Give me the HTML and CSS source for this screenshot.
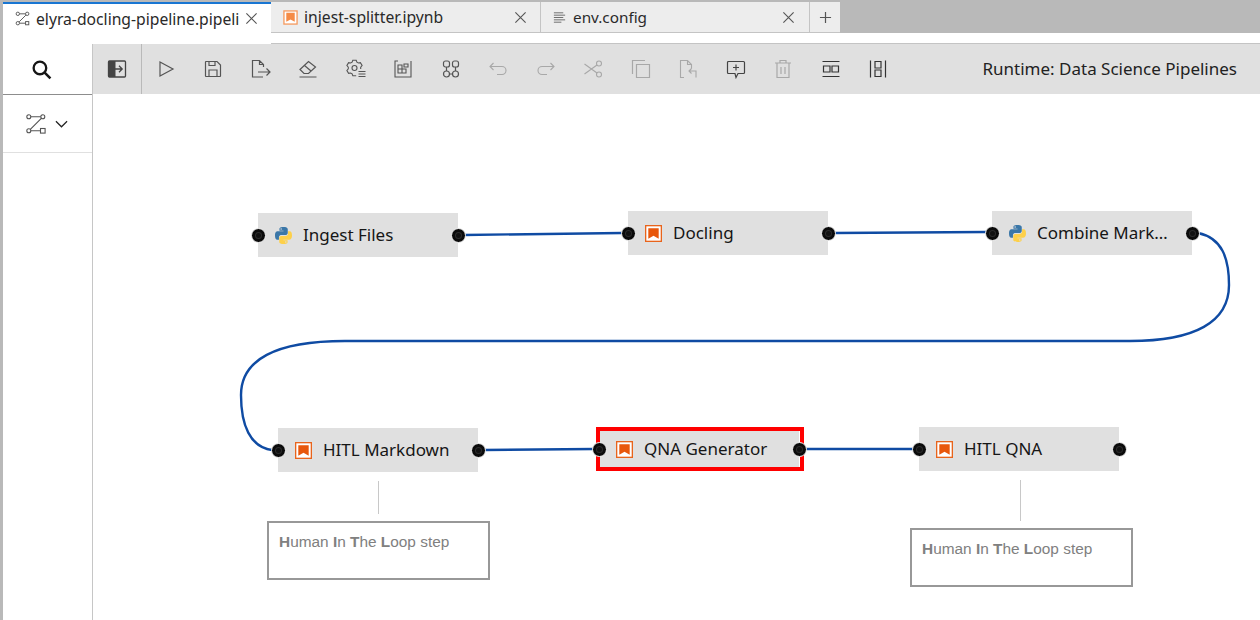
FILE: index.html
```html
<!DOCTYPE html>
<html>
<head>
    <title>elyra-docling-pipeline</title>
    <link rel="stylesheet" href="styles.css">
</head>
<body>
    <div class="tabbar">
        <div class="tab tab-active">
            <svg class="tab-icon" viewBox="0 0 16 16"><g fill="none" stroke="#555" stroke-width="1"><circle cx="3" cy="3" r="1.8"/><circle cx="13" cy="3" r="1.8"/><circle cx="3" cy="13" r="1.8"/><rect x="11.3" y="11.3" width="3.4" height="3.4"/><path d="M5 3h6M11.6 4.400L4.400 11.600M5 13h6"/></g></svg>
            <span class="tab-name">elyra-docling-pipeline.pipeli</span>
            <svg class="tab-close" viewBox="0 0 14 14"><path d="M1.500 1.500l11 11M12.500 1.500l-11 11" stroke="#555" stroke-width="1.2"/></svg>
        </div>
        <div class="tab tab-second">
            <svg class="tab-icon" viewBox="0 0 16 16"><rect x="1" y="1" width="14" height="14" fill="#fff" stroke="#f59a5f" stroke-width="1.4"/><path d="M3.500 3h9v9.500L8 10l-4.500 2.500z" fill="#f58b46"/></svg>
            <span class="tab-name">injest-splitter.ipynb</span>
            <svg class="tab-close" viewBox="0 0 14 14"><path d="M1.500 1.500l11 11M12.500 1.500l-11 11" stroke="#555" stroke-width="1.2"/></svg>
        </div>
        <div class="tab tab-third">
            <svg class="tab-icon" viewBox="0 0 16 16"><path d="M2 3h10M2 5.500h12M2 8h10M2 10.500h12M2 13h8" stroke="#666" stroke-width="1"/></svg>
            <span class="tab-name">env.config</span>
            <svg class="tab-close" viewBox="0 0 14 14"><path d="M1.500 1.500l11 11M12.500 1.500l-11 11" stroke="#555" stroke-width="1.2"/></svg>
        </div>
        <div class="tab-add">
            <svg viewBox="0 0 14 14"><path d="M7 1v12M1 7h12" stroke="#555" stroke-width="1.3"/></svg>
        </div>
    </div>
    <div class="main">
        <div class="sidebar">
            <div class="side-search">
                <svg viewBox="0 0 20 20"><circle cx="8.500" cy="8.500" r="6" fill="none" stroke="#161616" stroke-width="2.200"/><path d="M13 13l5.500 5.500" stroke="#161616" stroke-width="2.400"/></svg>
            </div>
            <div class="side-palette">
                <svg class="side-pipe" viewBox="0 0 20 20"><g fill="none" stroke="#555" stroke-width="1.100"><circle cx="2.800" cy="2.800" r="2"/><circle cx="16.800" cy="2.800" r="2"/><circle cx="2.800" cy="16.800" r="2"/><rect x="14.500" y="14.500" width="4.600" height="4.600"/><path d="M5 2.800h9.700M15.300 4.300L4.300 15.300M5 16.800h9.500"/></g></svg>
                <svg class="side-chevron" viewBox="0 0 14 8"><path d="M1 1l6 6 6-6" fill="none" stroke="#222" stroke-width="1.300"/></svg>
            </div>
        </div>
        <div class="content">
            <div class="toolbar">
                <div class="tool tool-first">
                    <svg viewBox="0 0 20 20"><rect x="1.500" y="2" width="17" height="16" rx="1" fill="none" stroke="#444" stroke-width="1.300"/><rect x="1.500" y="2" width="7" height="16" fill="#444"/><path d="M7 10h8M12 6.800l3.200 3.200-3.200 3.200" fill="none" stroke="#444" stroke-width="1.300"/></svg>
                </div>
                <div class="tool"><svg viewBox="0 0 20 20"><path d="M4 3l13 7-13 7z" fill="none" stroke="#555" stroke-width="1.200"/></svg></div>
                <div class="tool"><svg viewBox="0 0 20 20"><path d="M3 2.500h11l3.500 3.500v11a.5.5 0 0 1-.5.500H3a.5.5 0 0 1-.5-.500V3a.5.5 0 0 1 .5-.500zM6 17.500v-6.500h8v6.500M6 2.500v4h6v-4" fill="none" stroke="#555" stroke-width="1.200"/></svg></div>
                <div class="tool"><svg viewBox="0 0 20 20"><path d="M12 18H1.500V1.500h7l4 4V8M8.500 1.500v4h4M7 13h12M15.500 9.500L19 13l-3.500 3.500" fill="none" stroke="#555" stroke-width="1.200"/></svg></div>
                <div class="tool"><svg viewBox="0 0 20 20"><path d="M1.500 18h17M2 10.500L10.500 2.500l7 5.500-7 6.500H6z" fill="none" stroke="#555" stroke-width="1.200"/><path d="M6.500 6.500l6.500 5.500" stroke="#555" stroke-width="1.200"/></svg></div>
                <div class="tool"><svg viewBox="0 0 20 20"><path d="M14.700 10.100L14.700 8.100L16.100 6.500L14.400 3.600L12.400 4L10.900 3.200L10.200 1.200L6.800 1.200L6.100 3.200L4.600 4L2.600 3.600L.9 6.500L2.300 8.100L2.300 9.900L.9 11.500L2.600 14.400L4.600 14L6.100 14.800L6.800 16.800L10.200 16.800" fill="none" stroke="#555" stroke-width="1.100"/><circle cx="8.500" cy="9" r="2.500" fill="none" stroke="#555" stroke-width="1.100"/><path d="M12.500 12.500h7M12.500 15h7M12.500 17.500h7" stroke="#555" stroke-width="1.100"/></svg></div>
                <div class="tool"><svg viewBox="0 0 20 20"><path d="M18 2v16H2V2h3" fill="none" stroke="#555" stroke-width="1.100"/><path d="M5 6h4v4H5zM9 10h4v4H9zM5 10h4v4H5zM11 5h4v3h-4z" fill="none" stroke="#555" stroke-width="1.100"/></svg></div>
                <div class="tool"><svg viewBox="0 0 20 20"><g fill="none" stroke="#555" stroke-width="1.200"><rect x="2.500" y="2" width="6" height="6" rx="2"/><rect x="11.500" y="2" width="6" height="6" rx="2"/><rect x="2.500" y="12" width="6" height="6" rx="3"/><rect x="11.500" y="12" width="6" height="6" rx="3"/><path d="M5.500 8v4M14.500 8v4M8.500 15h3"/></g></svg></div>
                <div class="tool tool-off"><svg viewBox="0 0 20 20"><path d="M5.500 4L2 7.500 5.500 11M2 7.500h12a3.800 3.800 0 0 1 0 8H9" fill="none" stroke="#a8a8a8" stroke-width="1.100"/></svg></div>
                <div class="tool tool-off"><svg viewBox="0 0 20 20"><path d="M14.500 4L18 7.500 14.500 11M18 7.500H6a3.800 3.800 0 0 0 0 8h5" fill="none" stroke="#a8a8a8" stroke-width="1.100"/></svg></div>
                <div class="tool tool-off"><svg viewBox="0 0 20 20"><g fill="none" stroke="#a8a8a8" stroke-width="1.100"><circle cx="16" cy="4.500" r="2.500"/><circle cx="16" cy="15.500" r="2.500"/><path d="M14 6L1.500 15M14 14L1.500 5"/></g></svg></div>
                <div class="tool tool-off"><svg viewBox="0 0 20 20"><path d="M5.500 5.500h13v13h-13zM14 1.500H1.500V15" fill="none" stroke="#a8a8a8" stroke-width="1.200"/></svg></div>
                <div class="tool tool-off"><svg viewBox="0 0 20 20"><path d="M6 18.500H2.500V1.500h7l4 4v4M9.500 1.500v4h4M11 12H18v6.500M13.500 9.500L11 12l2.500 2.500" fill="none" stroke="#a8a8a8" stroke-width="1.100"/></svg></div>
                <div class="tool"><svg viewBox="0 0 20 20"><path d="M2.500 2.500h15a1 1 0 0 1 1 1v10a1 1 0 0 1-1 1h-5.500L10 18.500l-1-4H2.500a1 1 0 0 1-1-1v-10a1 1 0 0 1 1-1zM10 5.500v6M7 8.500h6" fill="none" stroke="#444" stroke-width="1.200"/></svg></div>
                <div class="tool tool-off"><svg viewBox="0 0 20 20"><path d="M2 4h16M7 4V1.500h6V4M4 4v14.500h12V4M8 8v7M12 8v7" fill="none" stroke="#a8a8a8" stroke-width="1.200"/></svg></div>
                <div class="tool"><svg viewBox="0 0 20 20"><path d="M1.500 2.500h17M1.500 17.500h17M2.500 7h6.500v6H2.500zM11 7h6.500v6H11z" fill="none" stroke="#333" stroke-width="1.200"/></svg></div>
                <div class="tool"><svg viewBox="0 0 20 20"><path d="M2.500 1.500v17M17.500 1.500v17M7 2.500h6v6.500H7zM7 11h6v6.500H7z" fill="none" stroke="#333" stroke-width="1.200"/></svg></div>
                <div class="runtime">Runtime: Data Science Pipelines</div>
            </div>
            <div class="canvas">
                <svg class="links" viewBox="93 94 1167 526">
                    <g fill="none" stroke="#0f4ba3" stroke-width="2.400">
                        <path d="M464 235L622 233"/>
                        <path d="M834 233L986 232"/>
                        <path d="M1198 233C1222 238 1229 258 1229 285C1229 322 1195 341 1130 341L345 341C275 341 241 360 241 395C241 425 250 447 272 450"/>
                        <path d="M484 450L594 449"/>
                        <path d="M805 449L913 449"/>
                    </g>
                    <path d="M378.500 481V514M1020.500 480V521" stroke="#c8c8c8" stroke-width="1"/>
                </svg>

                <div class="node node-ingest">
                    <span class="port port-in"></span>
                    <svg class="node-icon" viewBox="0 0 18 18"><path d="M8.900 0C4.500 0 4.700 1.900 4.700 1.900v2h4.300v.6H3C3 4.500 0 4.200 0 8.900s2.600 4.500 2.600 4.500h1.600v-2.200s-.1-2.600 2.600-2.600h4.300s2.400 0 2.400-2.400V2.400S13.900 0 8.900 0zM6.500 1.400a.8.8 0 1 1 0 1.600.8.8 0 0 1 0-1.600z" fill="#3b77a8"/><path d="M9.100 18c4.400 0 4.200-1.900 4.200-1.900v-2H9v-.6h6s3 .3 3-4.400-2.600-4.500-2.600-4.500h-1.600v2.200s.1 2.600-2.600 2.600H6.900s-2.400 0-2.400 2.400v3.800S4.100 18 9.100 18zm2.400-1.400a.8.8 0 1 1 0-1.600.8.8 0 0 1 0 1.600z" fill="#fdd04a"/></svg>
                    <span class="node-label">Ingest Files</span>
                    <span class="port port-out"></span>
                </div>
                <div class="node node-docling">
                    <span class="port port-in"></span>
                    <svg class="node-icon" viewBox="0 0 18 18"><rect x=".7" y=".7" width="16.600" height="16.600" fill="#fff" stroke="#e8641c" stroke-width="1.400"/><path d="M3.500 3.500h11v11L9 11.500l-5.500 3z" fill="#e8570c"/></svg>
                    <span class="node-label">Docling</span>
                    <span class="port port-out"></span>
                </div>
                <div class="node node-combine">
                    <span class="port port-in"></span>
                    <svg class="node-icon" viewBox="0 0 18 18"><path d="M8.900 0C4.500 0 4.700 1.900 4.700 1.900v2h4.300v.6H3C3 4.500 0 4.200 0 8.900s2.600 4.500 2.600 4.500h1.600v-2.200s-.1-2.600 2.600-2.600h4.300s2.400 0 2.400-2.400V2.400S13.900 0 8.900 0zM6.500 1.400a.8.8 0 1 1 0 1.600.8.8 0 0 1 0-1.600z" fill="#3b77a8"/><path d="M9.100 18c4.400 0 4.200-1.900 4.200-1.900v-2H9v-.6h6s3 .3 3-4.400-2.600-4.500-2.600-4.500h-1.600v2.200s.1 2.600-2.600 2.600H6.900s-2.400 0-2.400 2.400v3.800S4.100 18 9.100 18zm2.400-1.400a.8.8 0 1 1 0-1.600.8.8 0 0 1 0 1.600z" fill="#fdd04a"/></svg>
                    <span class="node-label">Combine Mark…</span>
                    <span class="port port-out"></span>
                </div>
                <div class="node node-hitl">
                    <span class="port port-in"></span>
                    <svg class="node-icon" viewBox="0 0 18 18"><rect x=".7" y=".7" width="16.600" height="16.600" fill="#fff" stroke="#e8641c" stroke-width="1.400"/><path d="M3.500 3.500h11v11L9 11.500l-5.500 3z" fill="#e8570c"/></svg>
                    <span class="node-label">HITL Markdown</span>
                    <span class="port port-out"></span>
                </div>
                <div class="node node-qna">
                    <span class="node-select"></span>
                    <span class="port port-in"></span>
                    <svg class="node-icon" viewBox="0 0 18 18"><rect x=".7" y=".7" width="16.600" height="16.600" fill="#fff" stroke="#e8641c" stroke-width="1.400"/><path d="M3.500 3.500h11v11L9 11.500l-5.500 3z" fill="#e8570c"/></svg>
                    <span class="node-label">QNA Generator</span>
                    <span class="port port-out"></span>
                </div>
                <div class="node node-hitlqna">
                    <span class="port port-in"></span>
                    <svg class="node-icon" viewBox="0 0 18 18"><rect x=".7" y=".7" width="16.600" height="16.600" fill="#fff" stroke="#e8641c" stroke-width="1.400"/><path d="M3.500 3.500h11v11L9 11.500l-5.500 3z" fill="#e8570c"/></svg>
                    <span class="node-label">HITL QNA</span>
                    <span class="port port-out"></span>
                </div>

                <div class="note note-one"><b>H</b>uman <b>I</b>n <b>T</b>he <b>L</b>oop step</div>
                <div class="note note-two"><b>H</b>uman <b>I</b>n <b>T</b>he <b>L</b>oop step</div>
            </div>
        </div>
    </div>
</body>
</html>
```

FILE: styles.css
```css
*{margin: 0; padding: 0; box-sizing: border-box;}
html,body{width: 1260px; height: 620px; overflow: hidden;}
body{background: #fff; border-left: 3px solid #b9b9b9; font-family: "Noto Sans", "Liberation Sans", sans-serif; color: #161616;}

/* tabs */
.tabbar{display: flex; height: 33px; margin-bottom: 11px; background: #b9b9b9; border-top: 2px solid #b9b9b9; box-shadow: 0 10px 0 #fff, 0 11px 0 #c4c4c4;}
.tab{display: flex; align-items: center; height: 31px; padding: 0 13px 0 12px; background: #ededed;
    border-right: 1px solid #c4c4c4; border-bottom: 1px solid #c4c4c4; font-size: 15.7px;}
.tab-active{width: 268px; background: #fff; border-top: 2px solid #1976d2; border-bottom: 0; border-right: 0; box-shadow: 0 11px 0 #fff;}
.tab-second{width: 270px;}
.tab-third{width: 269px; padding: 0 14px 0 11px;}
.tab-icon{width: 15px; height: 15px; flex: none; margin-right: 6px;}
.tab-name{flex: 1; white-space: nowrap; overflow: hidden; color: #2a2a2a;}
.tab-third .tab-name{font-size: 15.3px;}
.tab-close{width: 13px; height: 13px; flex: none;}
.tab-add{display: flex; align-items: center; justify-content: center; width: 30px; height: 31px; background: #ededed; border-bottom: 1px solid #c4c4c4;}
.tab-add svg{width: 13px; height: 13px;}

.main{display: flex; height: 576px;}

/* left palette */
.sidebar{width: 90px; flex: none; border-right: 1px solid #c6c6c6;}
.side-search{display: flex; align-items: center; justify-content: center; height: 51px; padding-right: 13px; border-bottom: 1px solid #8d8d8d;}
.side-search svg{width: 21px; height: 21px;}
.side-palette{display: flex; align-items: center; justify-content: center; gap: 9px; height: 58px; padding-right: 2px; border-bottom: 1px solid #e0e0e0;}
.side-pipe{width: 20px; height: 20px;}
.side-chevron{width: 13px; height: 8px;}

.content{flex: 1; display: flex; flex-direction: column; min-width: 0;}

/* toolbar */
.toolbar{display: flex; align-items: center; height: 50px; background: #e0e0e0; flex: none;}
.tool{display: flex; align-items: center; justify-content: center; width: 47.5px; height: 50px; flex: none;}
.tool svg{width: 20px; height: 20px;}
.tool-first{width: 49px; border-right: 1px solid #b9b9b9;}
.runtime{margin-left: auto; padding-right: 23px; padding-bottom: 2px; font-size: 17px; white-space: nowrap; color: #222;}

/* pipeline canvas */
.canvas{position: relative; flex: 1; background: #fff;}
.links{position: absolute; left: 0; top: 0; width: 1167px; height: 526px;}
.node{position: absolute; display: flex; align-items: center; width: 200px; height: 44px; padding-left: 17px; background: #e0e0e0;}
.node-icon{width: 17px; height: 17px; flex: none; margin-right: 11px;}
.node-label{margin-bottom: 2px; font-size: 17px; color: #161616; white-space: nowrap;}
.port{position: absolute; top: 50%; width: 15px; height: 15px; margin-top: -7.5px; background: #111; border: 1px solid #f4f4f4; border-radius: 50%; box-shadow: inset 0 0 0 3px #0b0b0b, inset 0 0 0 4px #2c2c2c;}
.port-in{left: -7px;}
.port-out{right: -8px;}
.node-select{position: absolute; left: -3px; top: 0; right: -5px; bottom: 0; border: 4px solid #f00;}
.node-ingest{left: 165px; top: 119px;}
.node-docling{left: 535px; top: 117px;}
.node-combine{left: 899px; top: 117px;}
.node-hitl{left: 185px; top: 334px;}
.node-qna{left: 506px; top: 333px;}
.node-hitlqna{left: 826px; top: 333px;}

.note{position: absolute; width: 223px; height: 59px; padding: 10px; background: #fff; border: 2px solid #989898; font-family: "Liberation Sans", Arial, sans-serif; font-size: 15.4px; color: #808080; white-space: nowrap;}
.note-one{left: 174px; top: 427px;}
.note-two{left: 817px; top: 434px;}
```
